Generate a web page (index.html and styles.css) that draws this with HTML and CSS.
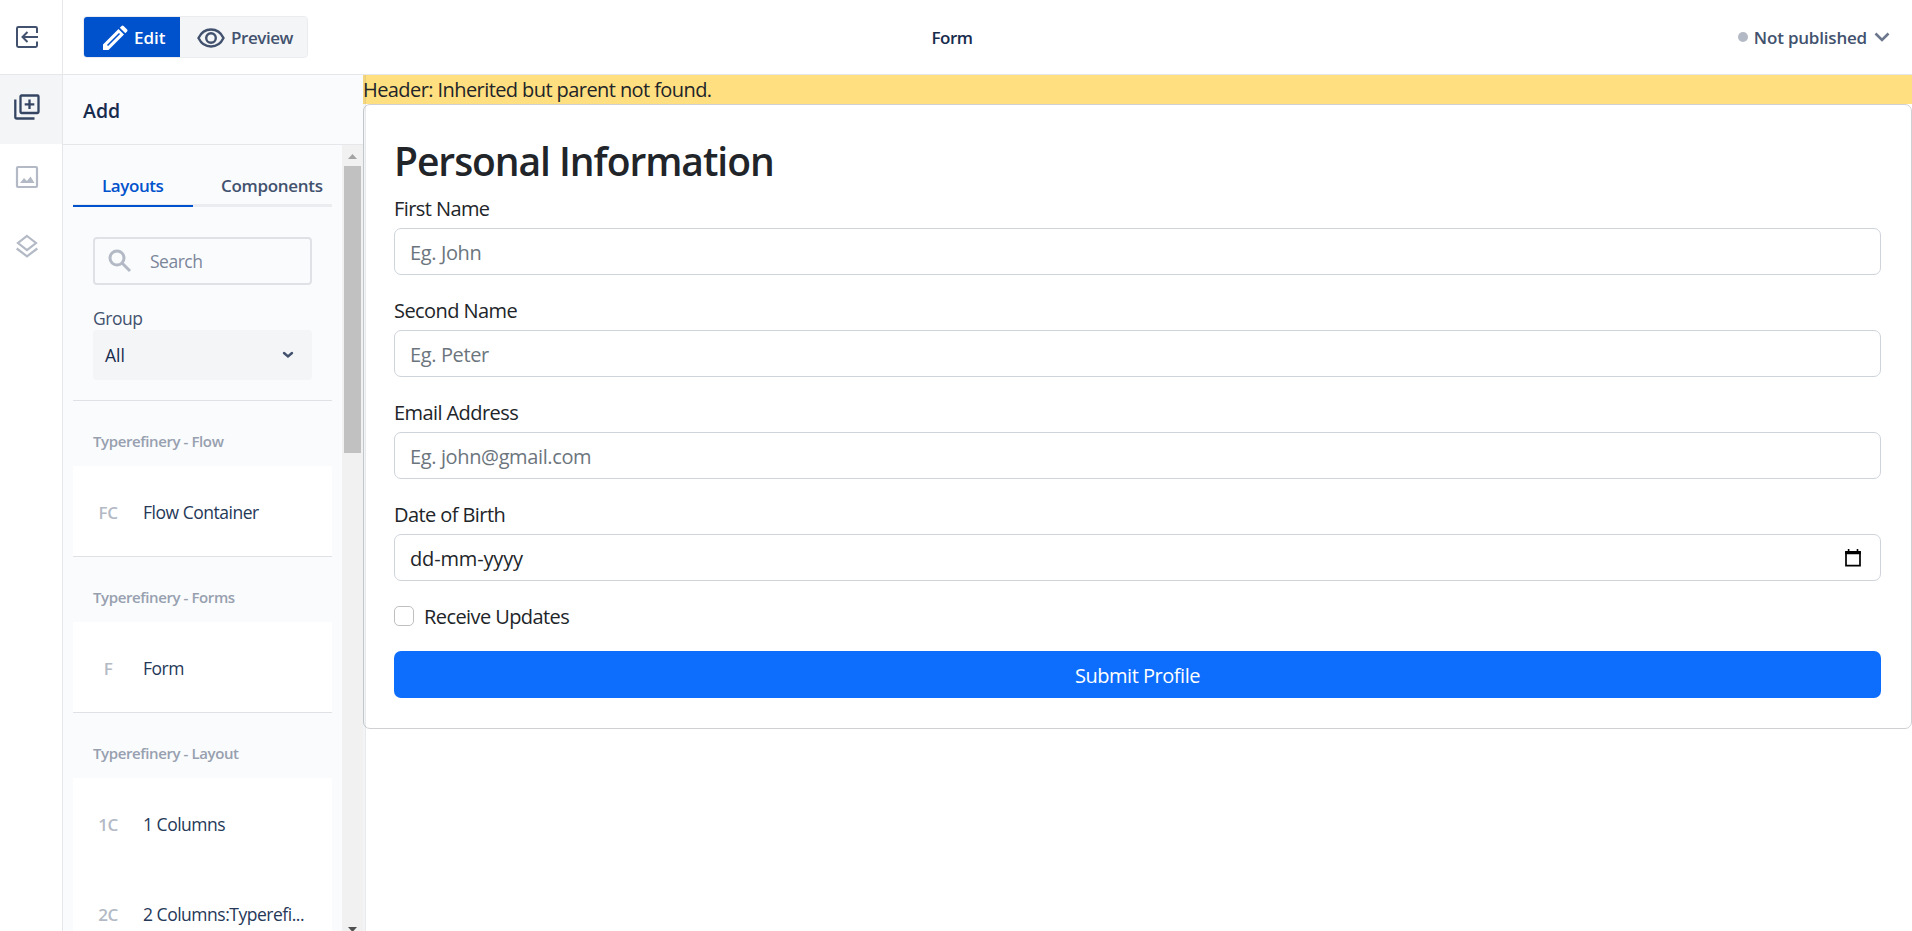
FILE: index.html
```html
<!DOCTYPE html>
<html lang="en">
<head>
<meta charset="utf-8">
<title>Form</title>
<link rel="stylesheet" href="styles.css">
</head>
<body>
<header class="topbar">
  <div class="tools">
    <div class="exit">
      <svg width="24" height="24" viewBox="0 0 24 24" fill="none" stroke="#42526e" stroke-width="2"><path d="M22 8V3.400Q22 2 20.600 2H3.400Q2 2 2 3.400V20.600Q2 22 3.400 22H20.600Q22 22 22 20.600V16.500M23 12H8M12.500 7L7.500 12L12.500 17"/></svg>
    </div>
    <div class="modes">
      <button class="mode mode-on"><svg width="26" height="26" viewBox="0 0 26 26"><path fill="#fff" d="M1 25V19.500L16.500 4L22 9.500L6.500 25ZM17.800 2.700L19.600.9Q20.600 0 21.600.9L25.100 4.400Q26 5.400 25.100 6.400L23.300 8.200Z"/><path d="M5.500 20.500L17.500 8.500" stroke="#0052cc" stroke-width="1.600"/></svg><span>Edit</span></button>
      <button class="mode"><svg width="28" height="20" viewBox="0 0 28 20" fill="none" stroke="#42526e" stroke-width="2.400"><path d="M1.500 10Q5.600 1.500 14 1.500T26.500 10Q22.400 18.500 14 18.500T1.500 10Z"/><circle cx="14" cy="10" r="4.800"/></svg><span>Preview</span></button>
    </div>
  </div>
  <div class="title">Form</div>
  <div class="status"><i class="dot"></i><span>Not published</span><svg width="16" height="11" viewBox="0 0 16 11" fill="none" stroke="#6b778c" stroke-width="2.600"><path d="M1.500 1.500L8 8L14.500 1.500"/></svg></div>
</header>
<div class="body">
  <nav class="rail">
    <div class="rail-item rail-on"><svg width="26" height="26" viewBox="0 0 26 26" fill="none" stroke="#344563" stroke-width="2.300"><rect x="6.500" y="1.500" width="18" height="17.500" rx="1"/><path d="M1.300 5.500V23Q1.300 24.500 2.800 24.500H20.500M15.500 5.500V15M10.700 10.300H20.300"/></svg></div>
    <div class="rail-item"><svg width="24" height="24" viewBox="0 0 24 24"><rect x="2" y="2" width="20" height="20" rx="1" fill="none" stroke="#b3bac5" stroke-width="2.200"/><path fill="#b3bac5" d="M5 18L9 13L12 16L15.500 11.500L19.500 18Z"/></svg></div>
    <div class="rail-item"><svg width="24" height="26" viewBox="0 0 24 26" fill="none" stroke="#b3bac5" stroke-width="2.200"><path d="M12 2L21 9L12 16L3 9ZM1.700 14.500L12 22.300L22.300 14.500"/></svg></div>
  </nav>
  <aside class="panel">
    <div class="panel-head">Add</div>
    <div class="panel-body">
      <div class="panel-content">
        <div class="tabs">
          <div class="tab tab-on">Layouts</div>
          <div class="tab">Components</div>
        </div>
        <div class="search"><svg width="24" height="24" viewBox="0 0 24 24" fill="none" stroke="#b3bac5" stroke-width="3"><circle cx="9" cy="9" r="7"/><path d="M14 14L22 22"/></svg><span>Search</span></div>
        <div class="group-label">Group</div>
        <div class="select"><span>All</span><svg width="12" height="8" viewBox="0 0 12 8" fill="none" stroke="#42526e" stroke-width="2.400" stroke-linecap="round"><path d="M2 2L6 5.500L10 2"/></svg></div>
        <section class="group">
          <h2>Typerefinery - Flow</h2>
          <div class="item"><b>FC</b><span>Flow Container</span></div>
        </section>
        <section class="group">
          <h2>Typerefinery - Forms</h2>
          <div class="item"><b>F</b><span>Form</span></div>
        </section>
        <section class="group">
          <h2>Typerefinery - Layout</h2>
          <div class="item"><b>1C</b><span>1 Columns</span></div>
          <div class="item"><b>2C</b><span>2 Columns:Typerefi...</span></div>
        </section>
      </div>
      <div class="scrollbar">
        <svg class="up" width="9" height="5" viewBox="0 0 9 5"><path fill="#a3a3a3" d="M0 5L4.500 0L9 5Z"/></svg>
        <div class="thumb"></div>
        <svg class="down" width="9" height="5" viewBox="0 0 9 5"><path fill="#505050" d="M0 0H9L4.500 5Z"/></svg>
      </div>
    </div>
  </aside>
  <main class="canvas">
    <div class="notice">Header: Inherited but parent not found.</div>
    <form class="card">
      <h1>Personal Information</h1>
      <label>First Name</label>
      <div class="input"><span>Eg. John</span></div>
      <label>Second Name</label>
      <div class="input"><span>Eg. Peter</span></div>
      <label>Email Address</label>
      <div class="input"><span>Eg. john@gmail.com</span></div>
      <label>Date of Birth</label>
      <div class="input date"><span>dd-mm-yyyy</span><svg width="16" height="18" viewBox="0 0 16 18"><path d="M1 3H15V16.700H1Z" fill="none" stroke="#000" stroke-width="1.700"/><path d="M.2 2H15.800V5.200H.2ZM2.800 0H4.400V3H2.800ZM11.700 0H13.300V3H11.700Z"/></svg></div>
      <div class="check"><i class="box"></i><span>Receive Updates</span></div>
      <button class="submit" type="button">Submit Profile</button>
    </form>
    <div class="edge"></div>
  </main>
</div>
</body>
</html>
```
FILE: styles.css
```css
* { box-sizing: border-box; }
body { margin: 0; height: 931px; overflow: hidden; display: flex; flex-direction: column; background: #fff; font-family: "Open Sans", "Noto Sans", sans-serif; font-size: 17.5px; color: #172b4d; }
button { font: inherit; border: 0; padding: 0; }
svg { flex: none; display: block; }
span { white-space: nowrap; }

.topbar { flex: none; height: 75px; display: grid; grid-template-columns: 1fr auto 1fr; align-items: center; border-bottom: 1px solid #e6e7eb; font-size: 17px; font-weight: 600; }
.tools { display: flex; align-items: center; align-self: stretch; }
.exit { align-self: stretch; width: 63px; display: flex; align-items: center; padding-left: 15px; border-right: 1px solid #e6e7eb; }
.modes { display: flex; margin-left: 20px; height: 42px; border: 1px solid #ebecf0; border-radius: 4px; background: #f4f5f7; overflow: hidden; }
.mode { display: flex; align-items: center; width: 127px; padding: 1px 0 0 17px; gap: 6px; background: #f4f5f7; color: #42526e; letter-spacing: -.43px; }
.mode-on { width: 96px; padding-left: 18px; background: #0052cc; color: #fff; letter-spacing: 0; }
.title { padding: 1px 8px 0 0; letter-spacing: -.45px; }
.status { justify-self: end; display: flex; align-items: center; margin-right: 22px; color: #42526e; letter-spacing: -.2px; }
.dot { width: 10px; height: 10px; border-radius: 50%; background: #b3bac5; margin-right: 6px; }
.status svg { margin-left: 7px; }

.body { flex: 1; min-height: 0; display: flex; }
.rail { flex: none; width: 63px; border-right: 1px solid #e6e7eb; }
.rail-item { height: 70px; display: flex; align-items: center; padding: 0 0 5px 15px; }
.rail-on { height: 69px; padding: 0 0 6px 14px; background: #f4f5f7; }

.panel { flex: none; width: 300px; display: flex; flex-direction: column; background: #fafbfd; }
.panel-head { flex: none; height: 70px; display: flex; align-items: center; padding: 2px 0 0 20px; border-bottom: 1px solid #e6e7eb; font-size: 19.5px; font-weight: 600; }
.panel-body { flex: 1; min-height: 0; display: flex; }
.panel-content { flex: 1; min-width: 0; overflow: hidden; padding: 24px 10px 0; }
.tabs { display: flex; height: 38px; border-bottom: 3px solid #ebecf0; font-size: 17px; font-weight: 600; letter-spacing: -.3px; color: #42526e; }
.tab { height: 38px; padding: 4px 0 0 28px; line-height: 26px; }
.tab-on { width: 120px; padding-left: 29px; border-bottom: 2px solid #0052cc; color: #0052cc; letter-spacing: -.42px; }
.search { display: flex; align-items: center; height: 48px; margin: 30px 20px 0; padding-left: 13px; gap: 18px; border: 2px solid #dfe1e6; border-radius: 4px; color: #7a869a; letter-spacing: -.5px; }
.group-label { margin: 21px 20px 0; height: 24px; line-height: 25px; color: #42526e; letter-spacing: -.5px; }
.select { display: flex; align-items: center; justify-content: space-between; height: 50px; margin: 0 20px 20px; padding: 0 18px 0 12px; border-radius: 4px; background: #f4f5f7; }
.group { border-top: 1px solid #dfe1e6; }
.group h2 { margin: 0; height: 65px; padding: 28px 20px 0; line-height: 24px; font-size: 15px; font-weight: 600; letter-spacing: -.4px; color: #97a0af; }
.item { display: flex; align-items: center; height: 90px; padding-top: 2px; background: #fff; color: #253858; letter-spacing: -.48px; }
.item b { width: 70px; text-align: center; font-weight: 600; font-size: 17px; color: #b3bac5; }
.scrollbar { flex: none; width: 21px; display: flex; flex-direction: column; align-items: center; background: #f1f1f1; }
.up { margin: 9px 0 7px; }
.thumb { width: 17px; height: 287px; background: #c1c1c1; }
.down { margin-top: auto; margin-bottom: -1px; }

.canvas { position: relative; flex: 1; min-width: 0; font-size: 20px; line-height: 30px; letter-spacing: -.58px; color: #212529; }
.notice { height: 29px; line-height: 30px; background: #ffdf80; }
.card { height: 625px; padding: 31px 30px 29px; border: 1px solid #ced0d3; border-radius: 7px; background: #fff; }
.card h1 { margin: 0 0 10px; padding-top: 1px; height: 48px; font-size: 39px; line-height: 48px; letter-spacing: -1.05px; font-weight: 600; }
.card label { display: block; margin-bottom: 4px; }
.input + label { margin-top: -19px; padding-top: 20px; }
.input { display: flex; align-items: center; height: 47px; margin-bottom: 20px; padding: 3px 19px 0 15px; border: 1px solid #ced4da; border-radius: 7px; letter-spacing: -.37px; color: #6c757d; }
.date { justify-content: space-between; letter-spacing: -.15px; color: #212529; }
.date svg { margin-top: -3px; }
.check { display: flex; align-items: center; height: 30px; margin-bottom: 20px; gap: 10px; }
.check span { padding-top: 2px; }
.box { width: 20px; height: 20px; border: 1px solid #bfbfbf; border-radius: 5px; }
.submit { display: block; width: 100%; height: 47px; padding-top: 2px; border-radius: 7px; background: #0d6efd; color: #fff; letter-spacing: -.48px; }
/* resize seam between the side panel and the canvas */
.edge { position: absolute; left: 0; top: 0; bottom: 0; width: 3px; background: rgba(9,30,66,.05); border-right: 1px solid rgba(9,30,66,.04); pointer-events: none; }
```
